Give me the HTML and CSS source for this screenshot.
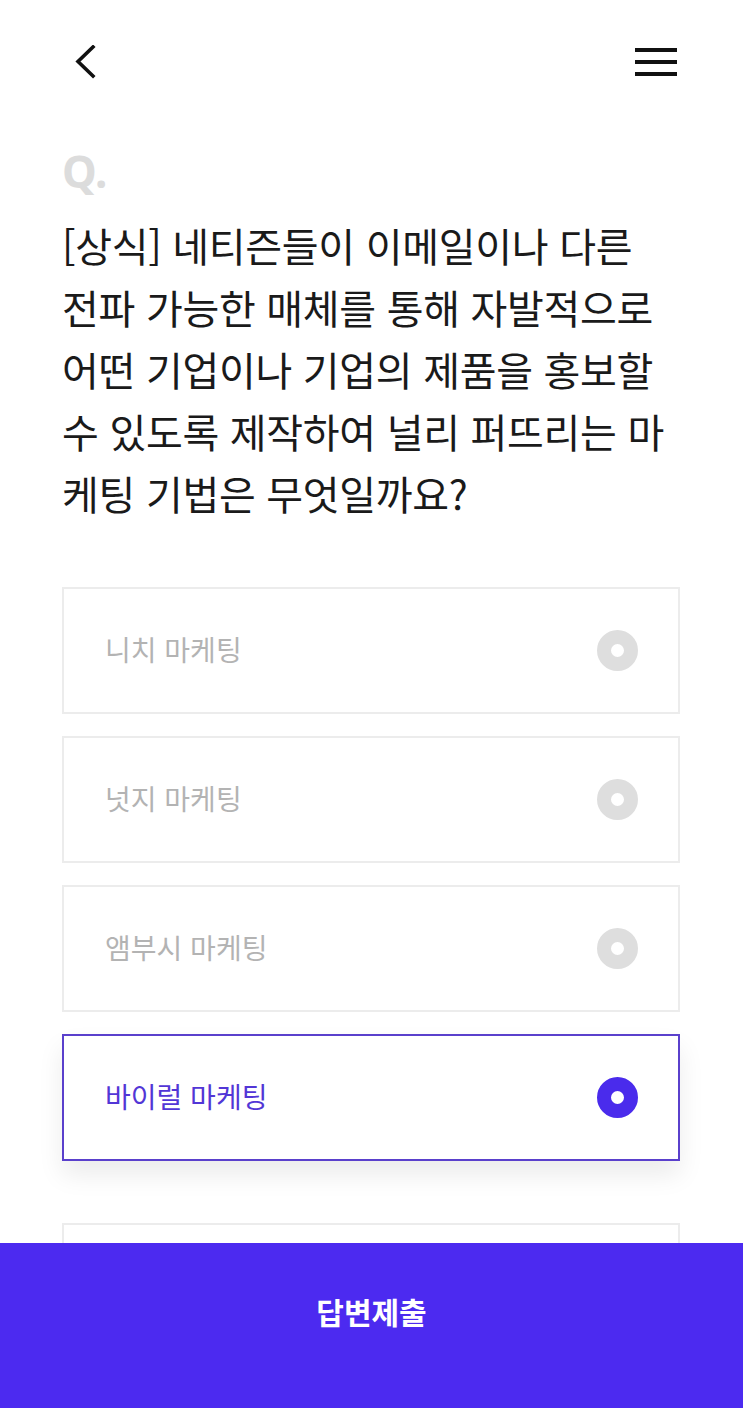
FILE: index.html
```html
<!DOCTYPE html>
<html lang="ko">
<head>
    <meta charset="UTF-8">
    <meta name="viewport" content="width=device-width, initial-scale=1.0">
    <title>퀴즈</title>
    <link rel="stylesheet" href="styles.css">
</head>
<body>
    <div class="page">
        <div class="top-bar">
            <button class="icon-btn back-btn" aria-label="뒤로">
                <svg width="24" height="34" viewBox="0 0 24 34">
                    <polyline points="18,2 3,16.5 18,31" fill="none" stroke="#111" stroke-width="3.6" stroke-linecap="square"/>
                </svg>
            </button>
            <button class="icon-btn menu-btn" aria-label="메뉴">
                <span></span><span></span><span></span>
            </button>
        </div>

        <div class="quiz">
            <div class="q-mark">Q.</div>
            <p class="question">[상식] 네티즌들이 이메일이나 다른<br>전파 가능한 매체를 통해 자발적으로<br>어떤 기업이나 기업의 제품을 홍보할<br>수 있도록 제작하여 널리 퍼뜨리는 마<br>케팅 기법은 무엇일까요?</p>

            <ul class="options">
                <li class="option">
                    <span class="option-label">니치 마케팅</span>
                    <span class="radio"></span>
                </li>
                <li class="option">
                    <span class="option-label">넛지 마케팅</span>
                    <span class="radio"></span>
                </li>
                <li class="option">
                    <span class="option-label">앰부시 마케팅</span>
                    <span class="radio"></span>
                </li>
                <li class="option selected">
                    <span class="option-label">바이럴 마케팅</span>
                    <span class="radio"></span>
                </li>
                <li class="option">
                    <span class="option-label">바이럴 마케팅</span>
                    <span class="radio"></span>
                </li>
            </ul>
        </div>
    </div>

    <button class="submit-btn">답변제출</button>

    <script>
        // 보기 선택
        document.querySelectorAll('.option').forEach(item => {
            item.addEventListener('click', function() {
                document.querySelectorAll('.option').forEach(i => i.classList.remove('selected'));
                this.classList.add('selected');
            });
        });
    </script>
</body>
</html>
```

FILE: styles.css
```css
* {
    margin: 0;
    padding: 0;
    box-sizing: border-box;
    font-family: 'Noto Sans CJK KR', 'Noto Sans', sans-serif;
}

body, html {
    height: 100%;
    overflow: hidden;
    background-color: #fff;
}

.page {
    padding: 0 62px;
}

.top-bar {
    height: 124px;
    display: flex;
    align-items: center;
    justify-content: space-between;
}

.icon-btn {
    background: none;
    border: none;
    padding: 0;
    cursor: pointer;
    display: flex;
}

.back-btn {
    margin-left: 13px;
}

.menu-btn {
    width: 42px;
    flex-direction: column;
    gap: 8px;
    margin-right: 4px;
}

.menu-btn span {
    display: block;
    height: 4px;
    background-color: #111;
}

.q-mark {
    margin-top: 22px;
    height: 50px;
    line-height: 50px;
    font-size: 44px;
    font-weight: bold;
    color: #dcdcdc;
    font-family: 'Noto Sans', sans-serif;
}

.question {
    margin-top: 18px;
    font-size: 40px;
    line-height: 62px;
    color: #1a1a1a;
    white-space: nowrap;
    letter-spacing: -0.3px;
}

.options {
    list-style: none;
    margin-top: 63px;
    width: 618px;
    display: flex;
    flex-direction: column;
    gap: 22px;
}

.option {
    height: 127px;
    display: flex;
    align-items: center;
    justify-content: space-between;
    padding: 0 40px 0 41px;
    border: 2px solid #ececec;
    background-color: #fff;
    cursor: pointer;
}

.option-label {
    font-size: 28px;
    color: #b3b3b3;
    margin-top: -3px;
}

.radio {
    width: 41px;
    height: 41px;
    border-radius: 50%;
    border: 14.5px solid #dedede;
    background-color: #fff;
}

.option.selected {
    border-color: #5a40cc;
    box-shadow: 0 14px 24px rgba(0, 0, 0, 0.08);
    margin-bottom: 40px;
}

.option.selected .option-label {
    color: #5236d6;
}

.option.selected .radio {
    border-color: #4a2bec;
}

.submit-btn {
    position: fixed;
    left: 0;
    right: 0;
    bottom: 0;
    height: 165px;
    padding-bottom: 30px;
    border: none;
    background-color: #4c2af0;
    color: #fff;
    font-size: 30px;
    font-weight: bold;
    cursor: pointer;
}
```
